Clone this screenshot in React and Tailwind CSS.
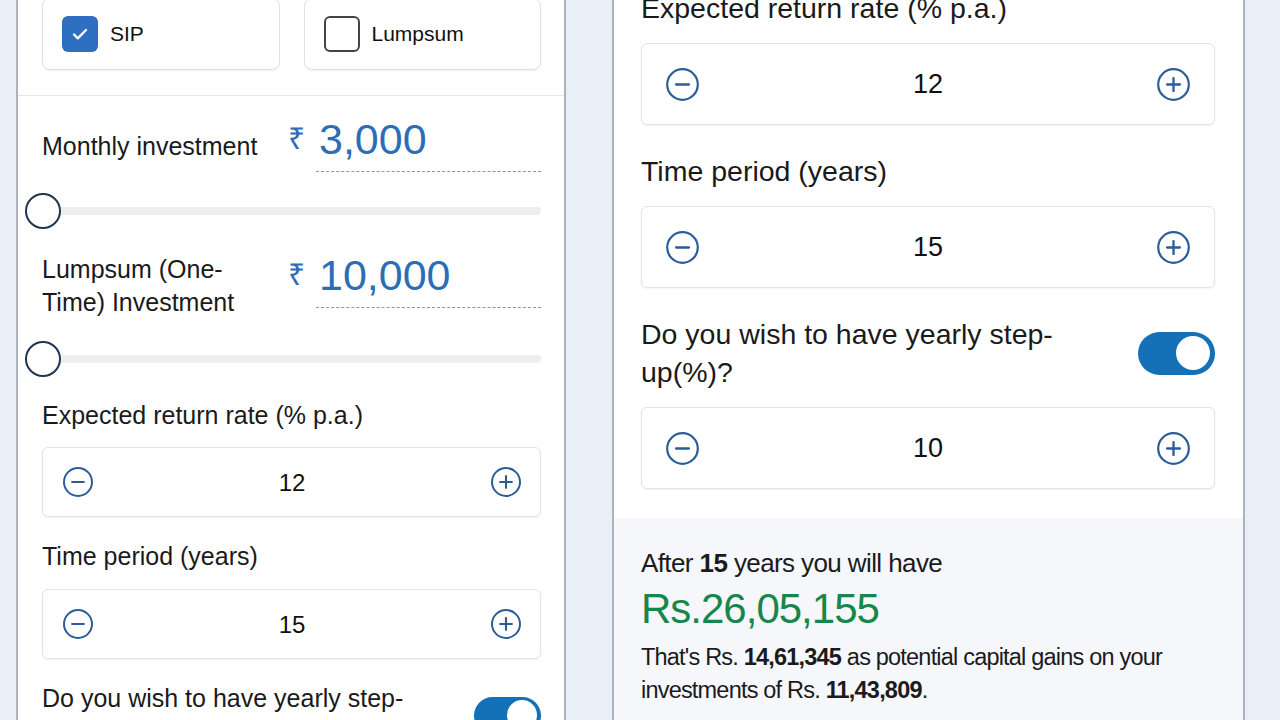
import { useState } from "react";

const FONT = { fontFamily: '"Liberation Sans", "Noto Sans", Arial, sans-serif' };

function CircleIcon({ plus, className }) {
  return (
    <svg viewBox="0 0 24 24" fill="none" className={className}>
      <circle cx="12" cy="12" r="10.5" stroke="#2a5d99" strokeWidth="1.5" />
      <path d="M7.6 12h8.8" stroke="#2a5d99" strokeWidth="1.6" strokeLinecap="round" />
      {plus && <path d="M12 7.6v8.8" stroke="#2a5d99" strokeWidth="1.6" strokeLinecap="round" />}
    </svg>
  );
}

function Stepper({ value, big }) {
  return (
    <div
      className={
        big
          ? "flex h-[82px] items-center justify-between rounded-[6px] border border-[#e2e4e8] bg-white pl-[23px] pr-[23px] shadow-[0_1px_2px_rgba(0,0,0,0.05)]"
          : "flex h-[70px] items-center justify-between rounded-[6px] border border-[#e2e4e8] bg-white pl-[19px] pr-[18px] shadow-[0_1px_2px_rgba(0,0,0,0.05)]"
      }
    >
      <CircleIcon className={big ? "h-[35px] w-[35px]" : "h-[32px] w-[32px]"} />
      <span className={big ? "text-[27px] text-[#111]" : "text-[24px] text-[#111]"}>{value}</span>
      <CircleIcon plus className={big ? "h-[35px] w-[35px]" : "h-[32px] w-[32px]"} />
    </div>
  );
}

function Toggle({ big }) {
  return (
    <div
      className={
        big
          ? "flex h-[43px] w-[77px] shrink-0 items-center justify-end rounded-full bg-[#1471b8] pr-[5px]"
          : "flex h-[37px] w-[67px] shrink-0 items-center justify-end rounded-full bg-[#1471b8] pr-[4px]"
      }
    >
      <div className={big ? "h-[34px] w-[34px] rounded-full bg-white" : "h-[30px] w-[30px] rounded-full bg-white"} />
    </div>
  );
}

function Slider() {
  return (
    <div className="flex h-[36px] items-center">
      <div className="relative z-10 -ml-[17px] h-[36px] w-[36px] shrink-0 rounded-full border-2 border-[#1f3550] bg-white" />
      <div className="-ml-[19px] h-[8px] flex-1 rounded-full bg-[#eeeeee]" />
    </div>
  );
}

function Amount({ value }) {
  return (
    <div className="flex items-start">
      <span className="mt-[7px] w-[28px] text-[30px] leading-[34px] text-[#2c6db5]">₹</span>
      <div className="w-[225px] border-b border-dashed border-[#8d949c] pb-[8px] pl-[3px]">
        <span className="block text-[43px] leading-[48px] text-[#2c6db5]">{value}</span>
      </div>
    </div>
  );
}

function ModeCard({ label, checked, onClick }) {
  return (
    <button
      onClick={onClick}
      className="flex h-[72px] flex-1 items-center gap-[12px] rounded-[8px] border border-[#e1e1e1] bg-white pl-[19px] text-left shadow-[0_1px_2px_rgba(0,0,0,0.06)]"
    >
      {checked ? (
        <span className="flex h-[36px] w-[36px] items-center justify-center rounded-[6px] bg-[#2e6fc2]">
          <svg viewBox="0 0 24 24" className="h-[24px] w-[24px]" fill="none">
            <path d="M6 12.5l3.8 3.8L18 8" stroke="white" strokeWidth="2.4" strokeLinecap="round" strokeLinejoin="round" />
          </svg>
        </span>
      ) : (
        <span className="h-[36px] w-[36px] rounded-[6px] border-2 border-[#444]" />
      )}
      <span className="text-[21px] text-[#111]">{label}</span>
    </button>
  );
}

export default function App() {
  const [mode, setMode] = useState("sip");

  return (
    <div style={FONT} className="flex h-[720px] w-[1280px] overflow-hidden bg-[#e9eff7] text-[#1a1a1a]">
      {/* left column: inputs */}
      <div className="ml-[16px] w-[550px] shrink-0 border-x-2 border-[#aeb3ba] bg-white">
        <div className="-mt-[2px] flex gap-[24px] border-b border-[#e4e6e9] pb-[25px] pl-[24px] pr-[23px]">
          <ModeCard label="SIP" checked={mode === "sip"} onClick={() => setMode("sip")} />
          <ModeCard label="Lumpsum" checked={mode === "lump"} onClick={() => setMode("lump")} />
        </div>

        <div className="pl-[24px] pr-[23px] text-[25px] leading-[33px]">
          <div className="mt-[19px] flex items-start">
            <div className="mt-[15px] w-[246px]">Monthly investment</div>
            <Amount value="3,000" />
          </div>
          <div className="mt-[21px]">
            <Slider />
          </div>

          <div className="mt-[22px] flex items-start">
            <div className="mt-[2px] w-[246px]">
              Lumpsum (One-
              <br />
              Time) Investment
            </div>
            <Amount value="10,000" />
          </div>
          <div className="mt-[22px]">
            <Slider />
          </div>

          <div className="mt-[22px]">Expected return rate (% p.a.)</div>
          <div className="mt-[15px]">
            <Stepper value="12" />
          </div>

          <div className="mt-[23px]">Time period (years)</div>
          <div className="mt-[16px]">
            <Stepper value="15" />
          </div>

          <div className="mt-[23px] flex items-center justify-between">
            <div className="w-[380px]">Do you wish to have yearly step-up(%)?</div>
            <Toggle />
          </div>
        </div>
      </div>

      {/* right column: continued inputs and result */}
      <div className="ml-[46px] flex w-[633px] shrink-0 flex-col border-x-2 border-[#aeb3ba] bg-white">
        <div className="pb-[29px] pl-[27px] pr-[28px] text-[28.5px] leading-[38px]">
          <div className="-mt-[11px]">Expected return rate (% p.a.)</div>
          <div className="mt-[16px]">
            <Stepper value="12" big />
          </div>

          <div className="mt-[27px]">Time period (years)</div>
          <div className="mt-[16px]">
            <Stepper value="15" big />
          </div>

          <div className="mt-[27px] flex items-center justify-between">
            <div className="w-[440px]">Do you wish to have yearly step-up(%)?</div>
            <Toggle big />
          </div>
          <div className="mt-[16px]">
            <Stepper value="10" big />
          </div>
        </div>

        <div className="flex-1 bg-[#f5f7fb] pl-[27px] pr-[28px] pt-[29px] text-[#1b1b1b]">
          <p className="text-[26px] leading-[33px] tracking-[-0.6px]">
            After <span className="font-bold">15</span> years you will have
          </p>
          <p className="mt-[5px] text-[42px] leading-[48px] tracking-[-1px] text-[#16874a]">Rs.26,05,155</p>
          <p className="mt-[8px] text-[23.5px] leading-[33px] tracking-[-0.8px]">
            That's Rs. <span className="font-bold">14,61,345</span> as potential capital gains on your
            investments of Rs. <span className="font-bold">11,43,809</span>.
          </p>
        </div>
      </div>
    </div>
  );
}
